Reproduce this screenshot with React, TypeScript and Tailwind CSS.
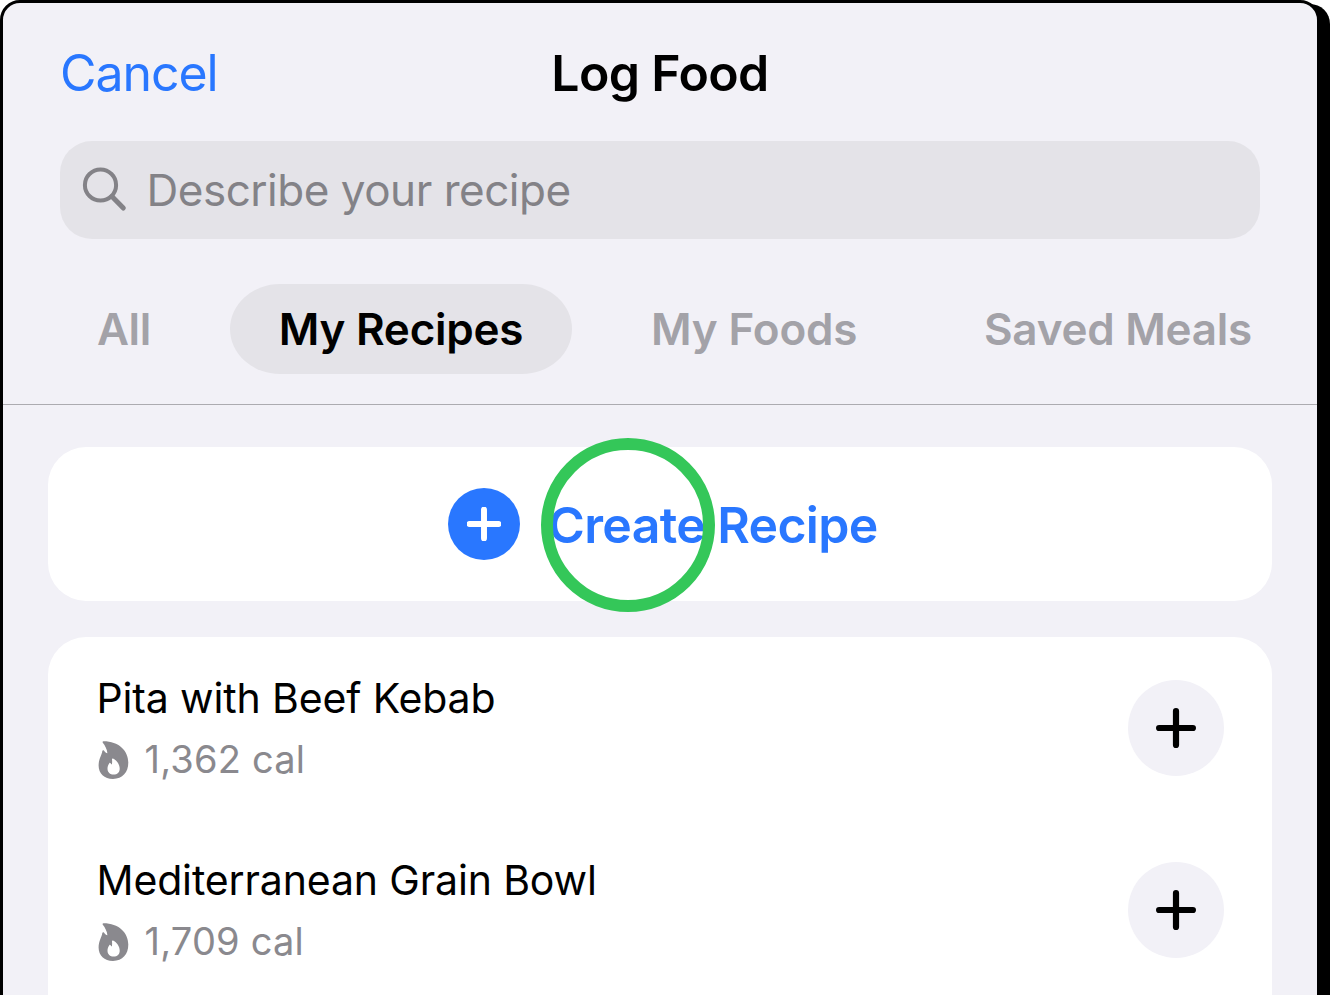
const recipes = [
  { name: 'Pita with Beef Kebab', cal: '1,362 cal' },
  { name: 'Mediterranean Grain Bowl', cal: '1,709 cal' },
];

function SearchIcon() {
  return (
    <svg className="size-[48px] shrink-0" viewBox="0 0 48 48" fill="none" stroke="#838287" strokeLinecap="round">
      <circle cx="19.5" cy="19" r="15.6" strokeWidth="4" />
      <path d="M31 30.6L42.3 42" strokeWidth="5" />
    </svg>
  );
}

function FlameIcon() {
  return (
    <svg className="mt-[2px] h-[40px] w-[32px] shrink-0" viewBox="0 0 32 40">
      <path
        fill="#8a898e"
        fillRule="evenodd"
        d="M5.6 1.2C4.6 1.1 4.3 2 4.8 2.8C7.2 5.8 9 9.3 9.4 13.3C8.1 13 7.1 12.2 6.1 10.8C5.4 10 4.6 10.2 4.3 11C3.9 15 0.6 18.9 0.6 25.6C0.6 33.6 6.3 39 15 39C24.6 39 30.3 32.3 30.3 22.6C30.3 10.4 20.6 1.3 5.6 1.2ZM15 18.6C19 20.6 21.7 24.6 21.7 28.8C21.7 32.5 19.2 34.6 15.7 34.6C12 34.6 9.5 32.3 9.5 28.8C9.5 26.4 10.2 24.6 11.3 23.2C11.8 22.6 12.3 22.8 12.6 23.3C12.9 24 13.3 24.4 13.9 24.6C14.2 22.7 14.2 20.9 14 19.3C14 18.7 14.4 18.4 15 18.6Z"
      />
    </svg>
  );
}

function Plus({ className, width }: { className: string; width: number }) {
  return (
    <svg className={className} viewBox="0 0 40 40" fill="none" stroke="currentColor" strokeWidth={width} strokeLinecap="round">
      <path d="M20 3.1V36.9M3.1 20H36.9" />
    </svg>
  );
}

export default function App() {
  return (
    <div className="h-[995px] w-[1330px] overflow-hidden bg-white font-['Inter',sans-serif] whitespace-nowrap">
      <div className="h-[1040px] w-[1320px] rounded-[20px] border-[3px] border-black bg-[#f2f1f7] shadow-[10px_4px_0_0_#000]">
        <header className="grid h-[138px] grid-cols-[1fr_auto_1fr] items-center px-[57px] pt-0.5 text-[50px] leading-none">
          <button className="justify-self-start tracking-[-1.05px] text-[#2977ff]">Cancel</button>
          <h1 className="font-semibold tracking-[-0.65px]">Log Food</h1>
        </header>

        <div className="ml-[57px] flex h-[98px] w-[1200px] items-center rounded-[32px] bg-[#e4e3e8] pl-[21px]">
          <SearchIcon />
          <span className="ml-[17.5px] text-[44px] leading-none tracking-[-0.48px] text-[#838287]">Describe your recipe</span>
        </div>

        <nav className="mt-[45px] flex h-[90px] items-center pl-[94px] text-[44px] leading-none font-semibold tracking-[-0.25px] text-[#a3a2a8]">
          <span className="w-[133px] tracking-[-0.4px]">All</span>
          <span className="flex h-[90px] w-[342px] items-center justify-center rounded-[50px/45px] bg-[#e4e3e8] text-black">My Recipes</span>
          <span className="ml-[79px] w-[333px] tracking-[-0.15px]">My Foods</span>
          <span>Saved Meals</span>
        </nav>

        <div className="mt-[30px] h-px bg-[#acabb0]" />

        <main className="mt-[42px] flex flex-col gap-[36px] px-[45px]">
          <button className="relative flex h-[154px] items-center rounded-[38px] bg-white pl-[400px] text-[#2977ff]">
            <span className="flex size-[72px] items-center justify-center rounded-full bg-[#2977ff]">
              <Plus className="size-[34px] text-white" width={7} />
            </span>
            <span className="ml-[28px] pt-0.5 text-[50px] leading-none font-semibold tracking-[-0.65px]">Create Recipe</span>
            <span className="absolute top-[-9px] left-[493px] size-[174px] rounded-full border-[12px] border-[#34c759]" />
          </button>

          <section className="h-[400px] rounded-t-[38px] bg-white">
            {recipes.map((r) => (
              <div key={r.name} className="flex h-[182px] items-center justify-between px-[48px]">
                <div className="pt-0.5">
                  <div className="pl-[0.5px] text-[41px] leading-[60px] tracking-[-0.14px]">{r.name}</div>
                  <div className="flex h-[62px] items-center gap-[15px] pl-[1.5px] text-[38px] leading-none tracking-[0.2px] text-[#8a898e]">
                    <FlameIcon />
                    <span>{r.cal}</span>
                  </div>
                </div>
                <button className="flex size-[96px] items-center justify-center rounded-full bg-[#f2f1f7]">
                  <Plus className="size-[40px] text-black" width={6.2} />
                </button>
              </div>
            ))}
          </section>
        </main>
      </div>
    </div>
  );
}
